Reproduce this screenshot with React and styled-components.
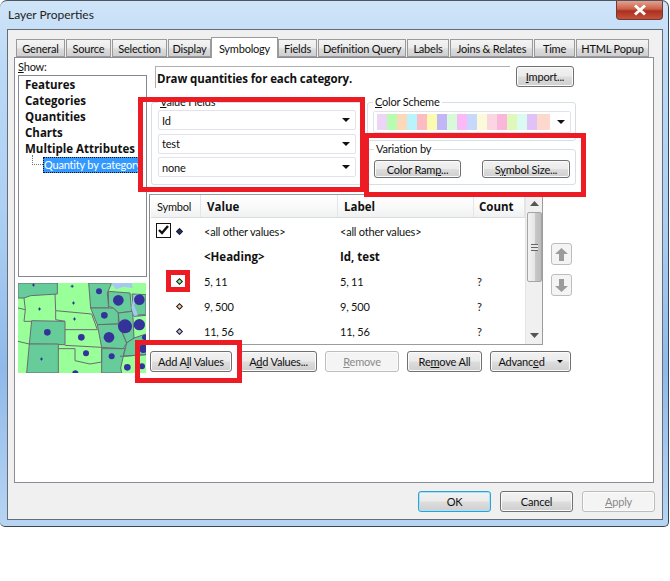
import React from "react";
import styled, { createGlobalStyle } from "styled-components";

const BOLD_FONT = `"Open Sans", "Liberation Sans", sans-serif`;

const GlobalStyle = createGlobalStyle`
  html, body { margin: 0; padding: 0; background: #fff; }
  body { font-family: Lato, "Open Sans", "Liberation Sans", sans-serif; font-size: 11px; letter-spacing: -0.2px; color: #111; }
  * { box-sizing: border-box; }
`;

const Page = styled.div`
  position: relative;
  width: 670px;
  height: 581px;
  overflow: hidden;
`;

const Window = styled.div`
  width: 669px;
  height: 527px;
  padding: 0 5px 6px 7px;
  display: flex;
  flex-direction: column;
  border: 1px solid #3c4650;
  border-left-width: 0;
  border-top-color: #4a5560;
  border-radius: 7px 7px 5px 5px;
  background: linear-gradient(180deg, #cfe4f8 0%, #bcdaf7 12%, #a9cdf2 45%, #8fb9ea 70%, #b7d5f3 100%);
`;

const TitleBar = styled.div`
  height: 28px;
  display: flex;
  align-items: center;
  justify-content: space-between;
  margin-left: -7px;
  padding-bottom: 2px;
`;

const Title = styled.span`
  padding-left: 8px;
  font-size: 12px;
  letter-spacing: 0;
  color: #222;
`;

const CloseButton = styled.div`
  width: 47px;
  height: 19px;
  margin-top: -7px;
  display: flex;
  align-items: center;
  justify-content: center;
  background: linear-gradient(180deg, #e5a28f 0%, #c9604a 45%, #ad2f1f 55%, #c4523c 100%);
  border: 1px solid #6e3a34;
  border-top: 0;
  border-radius: 0 0 4px 4px;
`;

const Client = styled.div`
  flex: 1;
  display: flex;
  flex-direction: column;
  padding: 7px 8px 0 6px;
  background: #f0f0f0;
  border: 1px solid #666c74;
`;

const TabStrip = styled.div`
  display: flex;
  height: 20px;
  padding-left: 2px;
  align-items: flex-end;
  position: relative;
  z-index: 1;
`;

const Tab = styled.div`
  width: ${p => p.$w}px;
  height: ${p => (p.$active ? 21 : 18)}px;
  margin-right: ${p => p.$gap ?? 1}px;
  margin-bottom: ${p => (p.$active ? -1 : 0)}px;
  display: flex;
  align-items: center;
  justify-content: center;
  border: 1px solid #9a9a9a;
  border-bottom: ${p => (p.$active ? "0" : "1px solid #9a9a9a")};
  background: ${p => (p.$active ? "#fff" : "linear-gradient(180deg, #f4f4f4 0%, #ebebeb 50%, #dcdcdc 55%, #cfcfcf 100%)")};
  white-space: nowrap;
`;

const TabPage = styled.div`
  height: 426px;
  display: flex;
  gap: 2px;
  padding: 1px 0 0 3px;
  background: #fff;
  border: 1px solid #8c8c96;
`;

const LeftColumn = styled.div`
  width: 129px;
  display: flex;
  flex-direction: column;
`;

const ShowLabel = styled.div`
  height: 16px;
  line-height: 15px;
`;

const TreeList = styled.div`
  height: 202px;
  padding: 1px 0 0 6px;
  border: 1px solid #828790;
  overflow: hidden;
`;

const TreeItem = styled.div`
  height: 16px;
  line-height: 16px;
  font-family: ${BOLD_FONT};
  font-size: 11.5px;
  font-weight: 700;
  letter-spacing: 0;
  white-space: nowrap;
`;

const TreeChild = styled.div`
  display: flex;
  align-items: center;
  margin-left: 7px;
`;

const TreeLine = styled.div`
  width: 11px;
  height: 10px;
  margin-top: -10px;
  flex-shrink: 0;
  border-left: 1px dotted #777;
  border-bottom: 1px dotted #777;
`;

const TreeSelected = styled.div`
  height: 16px;
  line-height: 15px;
  padding-left: 1px;
  color: #fff;
  background: #3399ff;
  outline: 1px dotted #111;
  outline-offset: -1px;
  white-space: nowrap;
`;

const MapPreview = styled.svg`
  display: block;
  width: 128px;
  height: 90px;
  margin-top: 6px;
`;

const RightColumn = styled.div`
  width: 504px;
  display: flex;
  flex-direction: column;
`;

const HeadRow = styled.div`
  display: flex;
  margin: 7px 0 0 6px;
  gap: 6px;
  height: 22px;
`;

const Heading = styled.div`
  width: 355px;
  padding: 4px 0 0 1px;
  font-family: ${BOLD_FONT};
  font-size: 11.5px;
  font-weight: 700;
  letter-spacing: -0.1px;
  border-top: 1px solid #b0b0b0;
  border-left: 1px solid #b0b0b0;
`;

const Button = styled.div`
  width: ${p => p.$w}px;
  height: ${p => p.$h ?? 21}px;
  display: flex;
  align-items: center;
  justify-content: center;
  gap: ${p => p.$gap ?? 0}px;
  flex-shrink: 0;
  white-space: nowrap;
  color: ${p => (p.$disabled ? "#8a8a8a" : "#111")};
  border: 1px solid ${p => (p.$disabled ? "#bdbdbd" : p.$primary ? "#2f9fd8" : "#707070")};
  border-radius: 3px;
  box-shadow: inset 0 0 0 1px ${p => (p.$primary ? "#a8e4f8" : "#fbfbfb")};
  background: ${p => (p.$disabled ? "#f4f4f4" : "linear-gradient(180deg, #f2f2f2 0%, #ebebeb 48%, #dddddd 52%, #cfcfcf 100%)")};
`;

const GroupRow = styled.div`
  display: flex;
  gap: 5px;
  margin: 7px 0 0 2px;
`;

const Group = styled.fieldset`
  width: ${p => p.$w}px;
  height: ${p => p.$h}px;
  margin: 0;
  padding: ${p => p.$pad};
  border: 1px solid #d5dfe5;
  border-radius: 3px;
  min-width: 0;
`;

const GroupLegend = styled.legend`
  padding: 0 2px;
  line-height: 14px;
`;

const GroupStack = styled.div`
  display: flex;
  flex-direction: column;
  gap: 1px;
`;

const ComboStack = styled.div`
  display: flex;
  flex-direction: column;
  gap: 3.5px;
  padding-top: 1px;
`;

const Combo = styled.div`
  height: ${p => p.$h ?? 20}px;
  display: flex;
  align-items: center;
  justify-content: space-between;
  padding: 0 5px 0 3px;
  background: #fff;
  border: 1px solid #e2e3ea;
  border-radius: 2px;
`;

const Caret = styled.span`
  width: 0;
  height: 0;
  border-left: ${p => p.$size ?? 4}px solid transparent;
  border-right: ${p => p.$size ?? 4}px solid transparent;
  border-top: ${p => p.$size ?? 4}px solid #111;
`;

const Ramp = styled.div`
  display: flex;
  height: 16px;
`;

const Swatch = styled.div`
  width: ${p => p.$w ?? 10}px;
  background: ${p => p.$c};
`;

const ButtonPair = styled.div`
  display: flex;
  justify-content: space-between;
  padding: 2px 0 0 0;
`;

const TableRow = styled.div`
  display: flex;
  margin-top: 9px;
  gap: 8px;
`;

const Table = styled.div`
  width: 394px;
  height: 151px;
  display: flex;
  border: 1px solid #9c9c9c;
  border-left-color: #8a8a8a;
`;

const TableBody = styled.div`
  flex: 1;
  overflow: hidden;
`;

const HeaderRow = styled.div`
  display: grid;
  grid-template-columns: 50px 137px 136px 1fr;
  height: 23px;
  margin-left: 1px;
  background: linear-gradient(180deg, #fff 0%, #fafafa 50%, #f0f1f2 100%);
  border-bottom: 1px solid #dcdcdc;
`;

const HeaderCell = styled.div`
  display: flex;
  align-items: center;
  padding-left: ${p => p.$pad ?? 6}px;
  font-family: ${p => (p.$bold ? BOLD_FONT : "inherit")};
  font-size: ${p => (p.$bold ? 11.5 : 11)}px;
  font-weight: ${p => (p.$bold ? 700 : 400)};
  letter-spacing: ${p => (p.$bold ? 0 : -0.2)}px;
  border-right: 1px solid #e4e5e8;
`;

const DataRow = styled.div`
  display: grid;
  grid-template-columns: 50px 136px 137px 1fr;
  align-items: center;
  height: 25px;
  padding-top: 1px;
  margin-left: 1px;
`;

const SymbolCell = styled.div`
  display: flex;
  align-items: center;
  justify-content: flex-end;
  gap: 6px;
  padding-right: 19px;
`;

const CheckBox = styled.div`
  width: 15px;
  height: 15px;
  margin-top: -2px;
  display: flex;
  align-items: center;
  justify-content: center;
  background: #fff;
  border: 1px solid #111;
`;

const Marker = styled.span`
  display: block;
  width: 5px;
  height: 5px;
  transform: rotate(45deg);
  background: ${p => p.$c};
  border: 1px solid #222;
`;

const TextCell = styled.div`
  padding-left: 3px;
  font-family: ${p => (p.$bold ? BOLD_FONT : "inherit")};
  font-size: ${p => (p.$bold ? 11.5 : 11)}px;
  font-weight: ${p => (p.$bold ? 700 : 400)};
  letter-spacing: ${p => (p.$bold ? 0 : -0.2)}px;
  white-space: nowrap;
`;

const Scrollbar = styled.div`
  width: 17px;
  display: flex;
  flex-direction: column;
  align-items: center;
  background: #f0f0f0;
  border-left: 1px solid #e4e4e4;
`;

const ScrollArrow = styled.div`
  height: 17px;
  display: flex;
  align-items: center;
  justify-content: center;
`;

const ScrollThumb = styled.div`
  width: 15px;
  height: 70px;
  display: flex;
  align-items: center;
  justify-content: center;
  border: 1px solid #a5a5a5;
  border-radius: 2px;
  background: linear-gradient(90deg, #f2f2f2 0%, #e6e6e6 50%, #c8c8c8 55%, #bcbcbc 100%);
`;

const Grip = styled.div`
  width: 7px;
  height: 7px;
  background: repeating-linear-gradient(180deg, #666 0 1px, #e8e8e8 1px 3px);
`;

const SpacerGrow = styled.div`
  flex: 1;
`;

const ArrowColumn = styled.div`
  display: flex;
  flex-direction: column;
  gap: 9px;
  padding-top: 49px;
`;

const MoveButton = styled.div`
  width: 21px;
  height: 22px;
  display: flex;
  align-items: center;
  justify-content: center;
  background: #f4f4f4;
  border: 1px solid #bdbdbd;
  border-radius: 3px;
`;

const ActionRow = styled.div`
  display: flex;
  margin: 6px 0 0 1px;
  gap: 8px;
`;

const Footer = styled.div`
  display: flex;
  justify-content: flex-end;
  gap: 9px;
  margin: 8px -1px 0 0;
`;

const Highlight = styled.div`
  position: absolute;
  left: ${p => p.$x}px;
  top: ${p => p.$y}px;
  width: ${p => p.$w}px;
  height: ${p => p.$h}px;
  border: 5px solid #ed1c24;
  pointer-events: none;
`;

const tabs = [
  { label: "General", w: 49 },
  { label: "Source", w: 45 },
  { label: "Selection", w: 55, gap: 1 },
  { label: "Display", w: 43, gap: 0 },
  { label: "Symbology", w: 67, active: true, gap: 0 },
  { label: "Fields", w: 39 },
  { label: "Definition Query", w: 88 },
  { label: "Labels", w: 42 },
  { label: "Joins & Relates", w: 83 },
  { label: "Time", w: 41 },
  { label: "HTML Popup", w: 73 },
];

const rampColors = [
  "#ecd5f7", "#b7fcb0", "#fcd9b8", "#b9f3fb", "#fdbcc2", "#fcfcb0", "#c2b6f6", "#d7fbd9",
  "#fbb9f8", "#c6d8fb", "#fbfbd9", "#fcd5e2", "#fbb7da", "#def9bb", "#dafbf2", "#e0c2f8",
];

const rows = [
  { marker: "#8fe89b", value: "5, 11", label: "5, 11" },
  { marker: "#fbc6a8", value: "9, 500", label: "9, 500" },
  { marker: "#c9b4ee", value: "11, 56", label: "11, 56" },
];

// states of the preview map, in 3x coordinates of the crop
const darkStates = [
  "24,25 142,25 142,58 62,63 42,70 24,70",
  "236,25 305,25 292,55 296,100 242,100",
  "295,50 360,55 365,110 325,115 310,100 296,95",
  "242,100 310,100 325,115 325,148 262,150",
  "65,138 165,140 165,210 58,208",
  "262,150 325,148 350,205 340,222 275,218",
  "325,115 368,110 372,190 350,205 328,150",
  "366,58 408,60 408,122 372,125",
  "58,208 145,208 145,295 50,295",
  "275,222 345,222 332,280 335,295 275,295",
  "350,205 372,190 408,178 408,240 340,245",
];

const borderLines = [
  "42,70 46,105 42,140 65,140",
  "135,58 137,108 137,135 165,140",
  "137,108 245,118 262,165 165,165",
  "165,212 275,218 275,262 240,268 195,258 195,222 145,222",
  "58,208 24,200",
  "24,100 46,105",
  "368,122 405,120",
  "330,245 408,240",
];

const bigDots = [
  [267, 50, 9], [325, 77, 16], [388, 75, 16], [283, 122, 10], [345, 155, 21], [388, 150, 17],
  [112, 173, 10], [214, 188, 10], [297, 188, 16], [404, 188, 8], [228, 236, 9], [305, 245, 9],
  [196, 296, 9], [352, 278, 10], [396, 275, 9], [400, 222, 13],
];

const plusDots = [[70, 31], [186, 35], [88, 103], [190, 85], [193, 133], [94, 253]];

const Mnemonic = ({ text, at }) => (
  <span>
    {text.slice(0, at)}
    <u>{text[at]}</u>
    {text.slice(at + 1)}
  </span>
);

const PreviewMap = () => (
  <MapPreview viewBox="24 25 384 270">
    <rect x="24" y="25" width="384" height="270" fill="#99ff99" />
    <g fill="#66cc99" stroke="#6b6b73" strokeWidth="3" strokeLinejoin="round">
      {darkStates.map(points => <polygon key={points} points={points} />)}
    </g>
    <g fill="none" stroke="#6b6b73" strokeWidth="3">
      {borderLines.map(points => <polyline key={points} points={points} />)}
    </g>
    <path d="M303 25 L365 25 L368 40 L340 36 L318 44 Z M372 62 L388 58 L382 70 L372 90 L384 122 L372 124 L364 100 Z" fill="#a4c8f0" />
    <g fill="#333399">
      {bigDots.map(([cx, cy, r]) => <circle key={cx + "-" + cy} cx={cx} cy={cy} r={r} />)}
      {plusDots.map(([x, y]) => <path key={x + "-" + y} d={`M${x - 4} ${y - 1.5}h3v-3h3v3h3v3h-3v3h-3v-3h-3z`} />)}
    </g>
  </MapPreview>
);

const SmallArrow = ({ down }) => (
  <svg width="9" height="5" viewBox="0 0 9 5">
    <path d={down ? "M0 0H9L4.5 5Z" : "M0 5H9L4.5 0Z"} fill="#555" />
  </svg>
);

const MoveArrow = ({ down }) => (
  <svg width="15" height="15" viewBox="0 0 15 15">
    <path
      d={down ? "M5 1H10V8H14L7.5 14L1 8H5Z" : "M5 14H10V7H14L7.5 1L1 7H5Z"}
      fill="#9b9b9b"
    />
  </svg>
);

export default function App() {
  return (
    <Page>
      <GlobalStyle />
      <Window>
        <TitleBar>
          <Title>Layer Properties</Title>
          <CloseButton>
            <svg width="14" height="12" viewBox="0 0 14 12">
              <path d="M2 1.5L12 10.5M12 1.5L2 10.5" stroke="#fff" strokeWidth="3" />
            </svg>
          </CloseButton>
        </TitleBar>
        <Client>
          <TabStrip>
            {tabs.map(t => (
              <Tab key={t.label} $w={t.w} $gap={t.gap} $active={t.active}>{t.label}</Tab>
            ))}
          </TabStrip>
          <TabPage>
            <LeftColumn>
              <ShowLabel><Mnemonic text="Show:" at={0} /></ShowLabel>
              <TreeList>
                <TreeItem>Features</TreeItem>
                <TreeItem>Categories</TreeItem>
                <TreeItem>Quantities</TreeItem>
                <TreeItem>Charts</TreeItem>
                <TreeItem>Multiple Attributes</TreeItem>
                <TreeChild>
                  <TreeLine />
                  <TreeSelected>Quantity by category</TreeSelected>
                </TreeChild>
              </TreeList>
              <PreviewMap />
            </LeftColumn>
            <RightColumn>
              <HeadRow>
                <Heading>Draw quantities for each category.</Heading>
                <Button $w={58}><Mnemonic text="Import..." at={0} /></Button>
              </HeadRow>
              <GroupRow>
                <Group $w={211} $h={90} $pad="0 5px 0 6px">
                  <GroupLegend><Mnemonic text="Value Fields" at={0} /></GroupLegend>
                  <ComboStack>
                    <Combo>Id<Caret /></Combo>
                    <Combo>test<Caret /></Combo>
                    <Combo>none<Caret /></Combo>
                  </ComboStack>
                </Group>
                <GroupStack>
                  <Group $w={209} $h={46} $pad="2px 4px 0 5px">
                    <GroupLegend><Mnemonic text="Color Scheme" at={0} /></GroupLegend>
                    <Combo $h={22}>
                      <Ramp>
                        {rampColors.map((c, i) => <Swatch key={i} $c={c} />)}
                        <Swatch $c="#fdd8cc" $w={13} />
                      </Ramp>
                      <Caret />
                    </Combo>
                  </Group>
                  <Group $w={209} $h={43} $pad="2px 5px 0 6px">
                    <GroupLegend>Variation by</GroupLegend>
                    <ButtonPair>
                      <Button $w={87} $h={18}><Mnemonic text="Color Ramp..." at={9} /></Button>
                      <Button $w={88} $h={18}><Mnemonic text="Symbol Size..." at={1} /></Button>
                    </ButtonPair>
                  </Group>
                </GroupStack>
              </GroupRow>
              <TableRow>
                <Table>
                  <TableBody>
                    <HeaderRow>
                      <HeaderCell>Symbol</HeaderCell>
                      <HeaderCell $bold $pad={6}>Value</HeaderCell>
                      <HeaderCell $bold $pad={6}>Label</HeaderCell>
                      <HeaderCell $bold $pad={5}>Count</HeaderCell>
                    </HeaderRow>
                    <DataRow>
                      <SymbolCell>
                        <CheckBox>
                          <svg width="11" height="10" viewBox="0 0 11 10">
                            <path d="M1 5L4 8L10 1" fill="none" stroke="#111" strokeWidth="2.4" />
                          </svg>
                        </CheckBox>
                        <Marker $c="#1f2d80" />
                      </SymbolCell>
                      <TextCell>&lt;all other values&gt;</TextCell>
                      <TextCell>&lt;all other values&gt;</TextCell>
                    </DataRow>
                    <DataRow>
                      <div />
                      <TextCell $bold>&lt;Heading&gt;</TextCell>
                      <TextCell $bold>Id, test</TextCell>
                    </DataRow>
                    {rows.map(r => (
                      <DataRow key={r.value}>
                        <SymbolCell><Marker $c={r.marker} /></SymbolCell>
                        <TextCell>{r.value}</TextCell>
                        <TextCell>{r.label}</TextCell>
                        <TextCell>?</TextCell>
                      </DataRow>
                    ))}
                  </TableBody>
                  <Scrollbar>
                    <ScrollArrow><SmallArrow /></ScrollArrow>
                    <ScrollThumb><Grip /></ScrollThumb>
                    <SpacerGrow />
                    <ScrollArrow><SmallArrow down /></ScrollArrow>
                  </Scrollbar>
                </Table>
                <ArrowColumn>
                  <MoveButton><MoveArrow /></MoveButton>
                  <MoveButton><MoveArrow down /></MoveButton>
                </ArrowColumn>
              </TableRow>
              <ActionRow>
                <Button $w={82}><Mnemonic text="Add All Values" at={5} /></Button>
                <Button $w={77}><Mnemonic text="Add Values..." at={1} /></Button>
                <Button $w={74} $disabled><Mnemonic text="Remove" at={0} /></Button>
                <Button $w={75}><Mnemonic text="Remove All" at={2} /></Button>
                <Button $w={81} $gap={12}>
                  <Mnemonic text="Advanced" at={6} />
                  <Caret $size={3} />
                </Button>
              </ActionRow>
            </RightColumn>
          </TabPage>
          <Footer>
            <Button $w={73} $primary>OK</Button>
            <Button $w={73}>Cancel</Button>
            <Button $w={73} $disabled><Mnemonic text="Apply" at={0} /></Button>
          </Footer>
        </Client>
      </Window>

      <Highlight $x={138} $y={97} $w={227} $h={95} />
      <Highlight $x={364} $y={133} $w={222} $h={64} />
      <Highlight $x={135} $y={340} $w={107} $h={43} />
      <Highlight $x={166} $y={270} $w={24} $h={22} />
    </Page>
  );
}
